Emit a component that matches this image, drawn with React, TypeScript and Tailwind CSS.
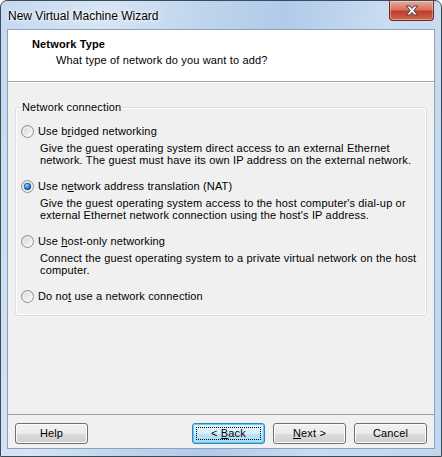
import React from 'react';

const font = { fontFamily: '"Liberation Sans", Arial, sans-serif' };

function Radio({ checked }: { checked?: boolean }) {
  return (
    <svg width="13" height="13" viewBox="0 0 13 13" className="shrink-0">
      <defs>
        <linearGradient id="rb" x1="0" y1="0" x2="1" y2="1">
          <stop offset="0" stopColor="#d4d4d4" />
          <stop offset="1" stopColor="#fdfdfd" />
        </linearGradient>
        <radialGradient id="dot" cx="0.4" cy="0.35" r="0.7">
          <stop offset="0" stopColor="#a4dcfb" />
          <stop offset="0.5" stopColor="#2b88d8" />
          <stop offset="1" stopColor="#0d3f7a" />
        </radialGradient>
      </defs>
      <circle cx="6.5" cy="6.5" r="6" fill="url(#rb)" stroke="#8e8f8f" strokeWidth="1" />
      <circle cx="6.5" cy="6.5" r="4.3" fill="none" stroke="#f4f4f4" strokeWidth="0.8" />
      {checked && <circle cx="6.5" cy="6.5" r="3.4" fill="url(#dot)" stroke="#1b4f8a" strokeWidth="0.6" />}
    </svg>
  );
}

function Option({
  label,
  desc,
  checked,
  last,
}: {
  label: React.ReactNode;
  desc?: React.ReactNode[];
  checked?: boolean;
  last?: boolean;
}) {
  return (
    <div className={last ? '' : 'mb-[12px]'}>
      <div className="flex h-[16px] items-center gap-[4px]">
        <Radio checked={checked} />
        <span className="leading-[16px]">{label}</span>
      </div>
      {desc && (
        <div className="mt-[3px] pl-[19px] leading-[12px]">
          {desc.map((d, i) => (
            <div key={i} className="h-[12px] whitespace-nowrap">
              {d}
            </div>
          ))}
        </div>
      )}
    </div>
  );
}

function Button({ children, focused }: { children: React.ReactNode; focused?: boolean }) {
  return (
    <button
      className={
        'relative h-[21px] w-[73px] rounded-[3px] border text-[11px] leading-[19px] tracking-[0.15px] text-black ' +
        (focused
          ? 'border-[#3c7fb1] bg-[linear-gradient(#eaf6fd_0%,#d9f0fc_50%,#bee6fd_50%,#a7d9f5_100%)] shadow-[inset_0_0_0_1px_#48d9f9]'
          : 'border-[#707070] bg-[linear-gradient(#f2f2f2_0%,#ebebeb_50%,#dddddd_50%,#cfcfcf_100%)] shadow-[inset_0_0_0_1px_#fcfcfc]')
      }
      style={font}
    >
      {focused && (
        <span className="pointer-events-none absolute inset-[3px] border border-dotted border-black" />
      )}
      {children}
    </button>
  );
}

export default function App() {
  return (
    <div className="h-[457px] w-[442px] overflow-hidden bg-white">
      <div className="flex h-[457px] w-[442px] flex-col rounded-t-[7px] border border-[#3d4a58] bg-[linear-gradient(100deg,#c4d8ef_0%,#d6e5f5_20%,#bed4ec_40%,#b0cbea_55%,#cadcf1_75%,#c2d7ef_100%)]">
        {/* title bar */}
        <div className="flex h-[28px] shrink-0 items-start justify-between pl-[7px] pr-[7px]">
          <span
            className="mt-[7px] text-[12px] leading-[16px] text-black [text-shadow:0_0_6px_#ffffff,0_0_3px_#ffffff]"
            style={font}
          >
            New Virtual Machine Wizard
          </span>
          <div className="flex h-[20px] w-[45px] items-center justify-center rounded-b-[4px] border border-t-0 border-[#6d2a22] bg-[linear-gradient(#e9a99c_0%,#d9725f_45%,#c13f2a_55%,#d0664c_100%)] shadow-[inset_0_0_0_1px_rgba(255,255,255,0.35)]">
            <svg width="14" height="11" viewBox="0 0 14 11">
              <path
                d="M1.5 1 H4.8 L7 3.6 L9.2 1 H12.5 L8.8 5.5 L12.5 10 H9.2 L7 7.4 L4.8 10 H1.5 L5.2 5.5 Z"
                fill="#ffffff"
                stroke="#3e3e3e"
                strokeWidth="1"
                strokeLinejoin="round"
              />
            </svg>
          </div>
        </div>

        {/* client area */}
        <div
          className="mx-[6px] flex h-[420px] shrink-0 flex-col border border-[#8aa2bd] bg-[#f0f0f0] text-[11px] tracking-[0.15px] text-black"
          style={font}
        >
          <div className="h-[52px] shrink-0 border-b border-[#a0a0a0] bg-white">
            <div className="pl-[24px] pt-[7px] font-bold leading-[14px]">Network Type</div>
            <div className="mt-[2px] pl-[48px] leading-[14px]">What type of network do you want to add?</div>
          </div>
          <div className="h-px shrink-0 bg-white" />

          <div className="flex-1 px-[7px] pt-[18px]">
            <fieldset className="rounded-[3px] border border-[#d5dfe5] px-[5px] pb-[11px] pt-[9px] shadow-[inset_0_0_0_1px_#ffffff]">
              <legend className="px-[1px] leading-[13px]">Network connection</legend>
              <Option
                label={
                  <>
                    Use b<u>r</u>idged networking
                  </>
                }
                desc={[
                  'Give the guest operating system direct access to an external Ethernet',
                  'network. The guest must have its own IP address on the external network.',
                ]}
              />
              <Option
                checked
                label={
                  <>
                    Use n<u>e</u>twork address translation (NAT)
                  </>
                }
                desc={[
                  "Give the guest operating system access to the host computer's dial-up or",
                  "external Ethernet network connection using the host's IP address.",
                ]}
              />
              <Option
                label={
                  <>
                    Use <u>h</u>ost-only networking
                  </>
                }
                desc={[
                  'Connect the guest operating system to a private virtual network on the host',
                  'computer.',
                ]}
              />
              <Option
                last
                label={
                  <>
                    Do no<u>t</u> use a network connection
                  </>
                }
              />
            </fieldset>
          </div>

          <div className="h-[34px] shrink-0 border-t border-[#a0a0a0]">
            <div className="flex items-center justify-between px-[7px] pt-[8px]">
              <Button>Help</Button>
              <div className="flex gap-[8px]">
                <Button focused>
                  &lt; <u>B</u>ack
                </Button>
                <Button>
                  <u>N</u>ext &gt;
                </Button>
                <Button>Cancel</Button>
              </div>
            </div>
          </div>
        </div>
      </div>
    </div>
  );
}
